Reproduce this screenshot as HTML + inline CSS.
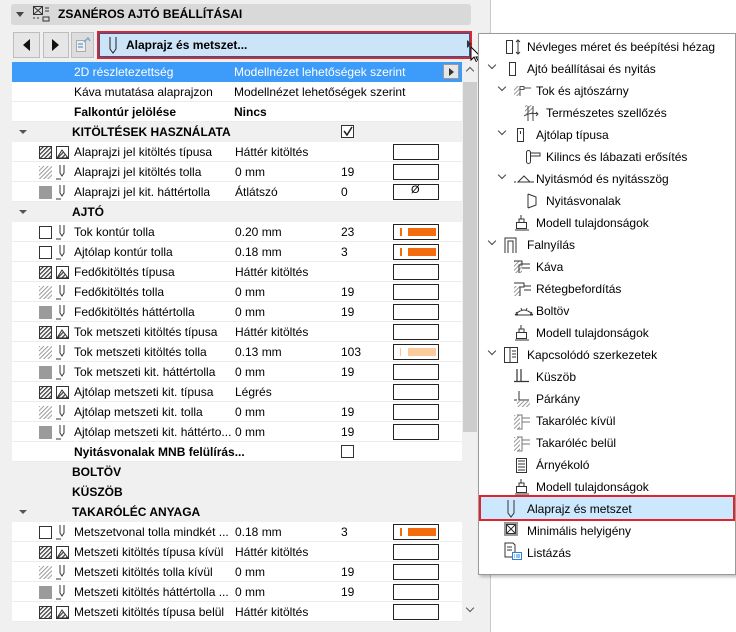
<!DOCTYPE html>
<html><head><meta charset="utf-8"><style>
*{box-sizing:border-box;margin:0;padding:0}
body{width:736px;height:632px;background:#fff;font-family:"Liberation Sans",sans-serif;font-size:12px;color:#000;position:relative;overflow:hidden}
.abs{position:absolute}
#left{left:0;top:0;width:491px;height:632px;background:#f0f0f0;border-right:1px solid #c8c8c8}
.hdr{left:11px;top:4px;width:460px;height:21px;background:#d9d9d9;border-radius:3px}
.btn{top:32px;height:26px;background:#e6e6e6;border:1px solid #bdbdbd}
.row{position:absolute;left:12px;width:450px;height:20px;background:#fff;border-bottom:1px solid #ececec}
.row.g{background:#f0f0f0;border-bottom:none}
.row span{position:absolute;top:3px;white-space:nowrap}
.b{font-weight:bold}
.sw{position:absolute;left:381px;top:2px;width:46px;height:16px;border:1px solid #222;background:#fff}
.ic{position:absolute;top:4px}
.m{position:absolute;white-space:nowrap;font-size:12px}
.mi{position:absolute;fill:none;stroke:#333}
.chev{position:absolute;width:6px;height:6px;border-right:1.5px solid #444;border-bottom:1.5px solid #444;transform:rotate(45deg)}
</style></head><body>
<div id="left" class="abs"></div>
<div class="abs hdr"></div>
<div class="abs" style="left:16px;top:12px;width:0;height:0;border-left:4px solid transparent;border-right:4px solid transparent;border-top:5px solid #444"></div>
<svg class="abs" style="left:32px;top:5px" width="18" height="17"><rect x="1.5" y="1.5" width="9" height="8" fill="none" stroke="#333"/><path d="M2 2l8 7M10 2l-8 7M13 3h4M13 6h4M11 12h6v4h-6zM1 13h2M5 13h2" stroke="#333" fill="none"/></svg>
<div class="abs b" style="left:58px;top:7px;font-size:12px">ZSANÉROS AJTÓ BEÁLLÍTÁSAI</div>
<div class="abs btn" style="left:13px;width:27px"></div>
<div class="abs" style="left:23px;top:39px;border-top:6px solid transparent;border-bottom:6px solid transparent;border-right:7px solid #111"></div>
<div class="abs btn" style="left:43px;width:26px"></div>
<div class="abs" style="left:52px;top:39px;border-top:6px solid transparent;border-bottom:6px solid transparent;border-left:7px solid #111"></div>
<div class="abs btn" style="left:71px;width:23px;background:#ddd"></div>
<svg class="abs" style="left:75px;top:36px" width="16" height="18"><rect x="1.5" y="4.5" width="9" height="11" fill="#eee" stroke="#aaa"/><path d="M3 8h5M3 11h5M9 6l4-4l2 3" stroke="#7aa6d8" fill="none" stroke-width="1.5"/></svg>
<div class="abs" style="left:97px;top:31px;width:375px;height:28px;border:2px solid #e3222b"></div>
<div class="abs" style="left:99px;top:33px;width:371px;height:24px;background:#cce4f7;border:1px solid #1b5e9e"></div>
<svg class="abs" style="left:108px;top:36px" width="10" height="18"><path d="M2 1v12l3 4l3-4V1" fill="none" stroke="#222"/></svg>
<div class="abs b" style="left:126px;top:38px">Alaprajz és metszet...</div>
<div class="abs" style="left:467px;top:40px;border-top:4px solid transparent;border-bottom:4px solid transparent;border-left:5px solid #333"></div>
<svg class="abs" style="left:470px;top:46px" width="14" height="18"><path d="M1 1v13l3-3l3 6l2-1l-3-5h5z" fill="#fff" stroke="#000"/></svg>

<div class="abs" style="left:462px;top:62px;width:16px;height:560px;background:#f0f0f0"></div>
<div class="abs" style="left:463px;top:82px;width:14px;height:350px;background:#cdcdcd"></div>
<div class="abs" style="left:467px;top:68px;width:6px;height:6px;border-left:1.5px solid #555;border-top:1.5px solid #555;transform:rotate(45deg)"></div>
<div class="abs" style="left:467px;top:605px;width:6px;height:6px;border-right:1.5px solid #555;border-bottom:1.5px solid #555;transform:rotate(45deg)"></div>

<svg width="0" height="0" style="position:absolute"><defs>
<pattern id="h" width="3" height="3" patternUnits="userSpaceOnUse" patternTransform="rotate(45)"><rect width="1.2" height="3" fill="#333"/></pattern>
<pattern id="hl" width="3" height="3" patternUnits="userSpaceOnUse" patternTransform="rotate(45)"><rect width="1" height="3" fill="#999"/></pattern>
</defs></svg>

<div class="row" style="top:62px;background:#3d9bfa;border:none"><span style="left:62px;color:#fff">2D részletezettség</span><span style="left:222px;color:#fff">Modellnézet lehetőségek szerint</span><div style="position:absolute;left:431px;top:2px;width:16px;height:15px;background:#e6e6e6;border:1px solid #999"></div><div style="position:absolute;left:437px;top:6px;border-top:4px solid transparent;border-bottom:4px solid transparent;border-left:5px solid #333"></div></div>
<div class="row" style="top:82px"><span style="left:62px">Káva mutatása alaprajzon</span><span style="left:222px">Modellnézet lehetőségek szerint</span></div>
<div class="row" style="top:102px"><span class="b" style="left:62px">Falkontúr jelölése</span><span class="b" style="left:222px">Nincs</span></div>
<div class="row g" style="top:122px"><div style="position:absolute;left:7px;top:8px;border-left:4px solid transparent;border-right:4px solid transparent;border-top:4px solid #555"></div><span class="b" style="left:60px">KITÖLTÉSEK HASZNÁLATA</span><svg style="position:absolute;left:329px;top:3px" width="14" height="14"><rect x=".5" y=".5" width="12" height="12" fill="#fff" stroke="#333"/><path d="M3 6l3 4l5-8" stroke="#222" fill="none" stroke-width="1.5"/></svg></div>

<div id="rows"></div>

<!-- menu -->
<div class="abs" style="left:478px;top:33px;width:258px;height:542px;background:#fff;border:1px solid #9a9a9a;box-shadow:2px 2px 3px rgba(0,0,0,.25)"></div>
<div class="abs" style="left:479px;top:495px;width:256px;height:26px;background:#cce8ff;border:2px solid #e3222b"></div>

<div class="m" style="left:527px;top:40px">Névleges méret és beépítési hézag</div>
<div class="chev" style="left:489px;top:62px"></div><div class="m" style="left:527px;top:62px">Ajtó beállításai és nyitás</div>
<div class="chev" style="left:499px;top:84px"></div><div class="m" style="left:536px;top:84px">Tok és ajtószárny</div>
<div class="m" style="left:546px;top:106px">Természetes szellőzés</div>
<div class="chev" style="left:499px;top:128px"></div><div class="m" style="left:536px;top:128px">Ajtólap típusa</div>
<div class="m" style="left:546px;top:150px">Kilincs és lábazati erősítés</div>
<div class="chev" style="left:499px;top:172px"></div><div class="m" style="left:536px;top:172px">Nyitásmód és nyitásszög</div>
<div class="m" style="left:546px;top:194px">Nyitásvonalak</div>
<div class="m" style="left:536px;top:216px">Modell tulajdonságok</div>
<div class="chev" style="left:489px;top:238px"></div><div class="m" style="left:527px;top:238px">Falnyílás</div>
<div class="m" style="left:536px;top:260px">Káva</div>
<div class="m" style="left:536px;top:282px">Rétegbefordítás</div>
<div class="m" style="left:536px;top:304px">Boltöv</div>
<div class="m" style="left:536px;top:326px">Modell tulajdonságok</div>
<div class="chev" style="left:489px;top:348px"></div><div class="m" style="left:527px;top:348px">Kapcsolódó szerkezetek</div>
<div class="m" style="left:536px;top:370px">Küszöb</div>
<div class="m" style="left:536px;top:392px">Párkány</div>
<div class="m" style="left:536px;top:414px">Takaróléc kívül</div>
<div class="m" style="left:536px;top:436px">Takaróléc belül</div>
<div class="m" style="left:536px;top:458px">Árnyékoló</div>
<div class="m" style="left:536px;top:480px">Modell tulajdonságok</div>
<div class="m" style="left:527px;top:502px">Alaprajz és metszet</div>
<div class="m" style="left:527px;top:524px">Minimális helyigény</div>
<div class="m" style="left:527px;top:546px">Listázás</div>

<svg class="mi" style="left:505px;top:38px" width="18" height="18"><rect x="1.5" y="2.5" width="6" height="13"/><path d="M13 2v14M11 4l2-2l2 2M11 14l2 2l2-2"/></svg>
<svg class="mi" style="left:505px;top:60px" width="18" height="18"><rect x="4.5" y="2.5" width="6" height="13"/></svg>
<svg class="mi" style="left:513px;top:82px" width="20" height="18"><rect x="1" y="4" width="6" height="10" fill="url(#hl)" stroke="none"/><path d="M7 4.5h4v3h-4M11 6h7M7 4v10" stroke="#555"/></svg>
<svg class="mi" style="left:523px;top:104px" width="20" height="18"><rect x="2" y="1" width="8" height="9" fill="url(#hl)" stroke="none"/><path d="M5 2v15M10 2v15M1 12q6-4 14-2M13 8l2 2l-2 2" stroke="#444"/></svg>
<svg class="mi" style="left:514px;top:126px" width="18" height="18"><rect x="3.5" y="2.5" width="6" height="13"/><path d="M6.5 5v3"/></svg>
<svg class="mi" style="left:524px;top:148px" width="18" height="18"><rect x="2.5" y="2.5" width="4" height="13" rx="2"/><path d="M6 5h10v3h-10"/></svg>
<svg class="mi" style="left:513px;top:170px" width="22" height="18"><path d="M1 12h2M5 12l6-6l6 6zM17 12h4" /></svg>
<svg class="mi" style="left:524px;top:192px" width="18" height="18"><path d="M4 2v14M4 2l8 3v8l-8 3"/></svg>
<svg class="mi" style="left:513px;top:214px" width="18" height="18"><rect x="3.5" y="8.5" width="10" height="6"/><path d="M6 8v-3h5v3M8 5v-4M2 16h14"/></svg>
<svg class="mi" style="left:503px;top:236px" width="18" height="18"><path d="M2 17v-15h11v15M5 17v-12h5v12"/></svg>
<svg class="mi" style="left:513px;top:258px" width="20" height="18"><rect x="1" y="3" width="8" height="12" fill="url(#hl)" stroke="none"/><path d="M1 3h8v4h-3v8M9 6h8M9 10h8"/></svg>
<svg class="mi" style="left:513px;top:280px" width="20" height="18"><rect x="1" y="6" width="6" height="10" fill="url(#hl)" stroke="none"/><path d="M1 3h10v4h-4v9M11 6h7M11 10h7"/></svg>
<svg class="mi" style="left:513px;top:302px" width="22" height="18"><path d="M2 13q9-10 18 0M5 13l-2-3M9 9l-1-3M13 9l1-3M17 13l2-3M2 13h18"/></svg>
<svg class="mi" style="left:513px;top:324px" width="18" height="18"><rect x="3.5" y="8.5" width="10" height="6"/><path d="M6 8v-3h5v3M8 5v-4M2 16h14"/></svg>
<svg class="mi" style="left:503px;top:346px" width="18" height="18"><rect x="1.5" y="1.5" width="13" height="15"/><path d="M7 2v14M9 5h4M9 8h4M9 11h4"/></svg>
<svg class="mi" style="left:513px;top:368px" width="18" height="18"><path d="M4 1v12M8 1v12M1 13.5h15" stroke-width="1.2"/></svg>
<svg class="mi" style="left:513px;top:390px" width="18" height="18"><rect x="4" y="11" width="13" height="6" fill="url(#hl)" stroke="none"/><path d="M6 1v9h10M1 10h3"/></svg>
<svg class="mi" style="left:513px;top:412px" width="20" height="18"><rect x="1" y="3" width="6" height="14" fill="url(#hl)" stroke="none"/><path d="M4 3h5v14h-5M9 6h8M9 10h8" stroke="#777"/></svg>
<svg class="mi" style="left:513px;top:434px" width="20" height="18"><rect x="1" y="3" width="6" height="14" fill="url(#hl)" stroke="none"/><path d="M4 3h5v14h-5M9 6h8M9 10h8" stroke="#777"/></svg>
<svg class="mi" style="left:513px;top:456px" width="18" height="18"><rect x="3.5" y="2.5" width="10" height="14"/><path d="M5 5h7M5 8h7M5 11h7M5 14h7"/></svg>
<svg class="mi" style="left:513px;top:478px" width="18" height="18"><rect x="3.5" y="8.5" width="10" height="6"/><path d="M6 8v-3h5v3M8 5v-4M2 16h14"/></svg>
<svg class="mi" style="left:505px;top:499px" width="14" height="20"><path d="M3 1v13l3 4l3-4V1"/></svg>
<svg class="mi" style="left:503px;top:520px" width="18" height="18"><rect x="1" y="2" width="14" height="14" fill="#999" stroke="none"/><rect x="3.5" y="4.5" width="9" height="9" fill="#fff"/><path d="M4 5l8 8M12 5l-8 8"/></svg>
<svg class="mi" style="left:503px;top:542px" width="22" height="20"><path d="M2 1h8l2 2v12h-10zM4 5h5M4 8h5"/><rect x="9.5" y="10.5" width="9" height="7" fill="#fff" stroke="#2a7fd8"/><path d="M11 13h1M13 13h4M11 15h1M13 15h4" stroke="#2a7fd8"/></svg>

<script>
var R=[
[142,'H','F','Alaprajzi jel kitöltés típusa','Háttér kitöltés','',''],
[162,'L','P','Alaprajzi jel kitöltés tolla','0 mm','19',''],
[182,'G','P','Alaprajzi jel kit. háttértolla','Átlátszó','0','x'],
[202,'#','AJTÓ'],
[222,'E','P','Tok kontúr tolla','0.20 mm','23','o'],
[242,'E','P','Ajtólap kontúr tolla','0.18 mm','3','o'],
[262,'H','F','Fedőkitöltés típusa','Háttér kitöltés','',''],
[282,'L','P','Fedőkitöltés tolla','0 mm','19',''],
[302,'G','P','Fedőkitöltés háttértolla','0 mm','19',''],
[322,'H','F','Tok metszeti kitöltés típusa','Háttér kitöltés','',''],
[342,'L','P','Tok metszeti kitöltés tolla','0.13 mm','103','p'],
[362,'G','P','Tok metszeti kit. háttértolla','0 mm','19',''],
[382,'H','F','Ajtólap metszeti kit. típusa','Légrés','',''],
[402,'L','P','Ajtólap metszeti kit. tolla','0 mm','19',''],
[422,'G','P','Ajtólap metszeti kit. háttérto...','0 mm','19',''],
[442,'N'],
[462,'$','BOLTÖV'],[482,'$','KÜSZÖB'],[502,'#','TAKARÓLÉC ANYAGA'],
[522,'E','P','Metszetvonal tolla mindkét ...','0.18 mm','3','o'],
[542,'H','F','Metszeti kitöltés típusa kívül','Háttér kitöltés','',''],
[562,'L','P','Metszeti kitöltés tolla kívül','0 mm','19',''],
[582,'G','P','Metszeti kitöltés háttértolla ...','0 mm','19',''],
[602,'H','F','Metszeti kitöltés típusa belül','Háttér kitöltés','','']];
var I={H:'<svg class="ic" style="left:27px" width="14" height="14"><rect x=".5" y=".5" width="12" height="12" fill="url(#h)" stroke="#333"/></svg>',
L:'<svg class="ic" style="left:27px" width="14" height="14"><rect x="0" y="0" width="13" height="13" fill="url(#hl)"/></svg>',
G:'<div class="ic" style="left:27px;width:13px;height:13px;background:#9b9b9b"></div>',
E:'<div class="ic" style="left:27px;width:13px;height:13px;border:1px solid #333"></div>',
P:'<svg class="ic" style="left:43px;top:2px" width="12" height="17"><path d="M5 1v8l2 3l2-3V1M1 15h5" fill="none" stroke="#333"/></svg>',
F:'<svg class="ic" style="left:44px" width="13" height="13"><rect x=".5" y=".5" width="12" height="12" fill="none" stroke="#333"/><path d="M1 12l5-8l6 8z" fill="url(#h)" stroke="#333"/></svg>'};
var h='';
R.forEach(function(r){var t=r[0];
if(r[1]=='#'||r[1]=='$'){h+='<div class="row g" style="top:'+t+'px">'+(r[1]=='#'?'<div style="position:absolute;left:7px;top:8px;border-left:4px solid transparent;border-right:4px solid transparent;border-top:4px solid #555"></div>':'')+'<span class="b" style="left:60px">'+r[2]+'</span></div>';return;}
if(r[1]=='N'){h+='<div class="row" style="top:'+t+'px"><span class="b" style="left:62px">Nyitásvonalak MNB felülírás...</span><div style="position:absolute;left:329px;top:3px;width:13px;height:13px;border:1px solid #333"></div></div>';return;}
var s='<div class="sw">';
if(r[6]=='o')s+='<div style="position:absolute;left:6px;top:3px;width:2px;height:8px;background:#f26c0d"></div><div style="position:absolute;left:14px;top:3px;width:28px;height:8px;background:#f26c0d"></div>';
if(r[6]=='p')s+='<div style="position:absolute;left:6px;top:3px;width:1px;height:8px;background:#f9c79c"></div><div style="position:absolute;left:14px;top:3px;width:28px;height:8px;background:#fbcb9c"></div>';
if(r[6]=='x')s+='<span style="left:17px;top:-1px;font-size:11px">Ø</span>';
s+='</div>';
h+='<div class="row" style="top:'+t+'px">'+I[r[1]]+I[r[2]]+'<span style="left:62px">'+r[3]+'</span><span style="left:223px">'+r[4]+'</span><span style="left:329px">'+r[5]+'</span>'+s+'</div>';});
document.getElementById('rows').innerHTML=h;
</script>
</body></html>
